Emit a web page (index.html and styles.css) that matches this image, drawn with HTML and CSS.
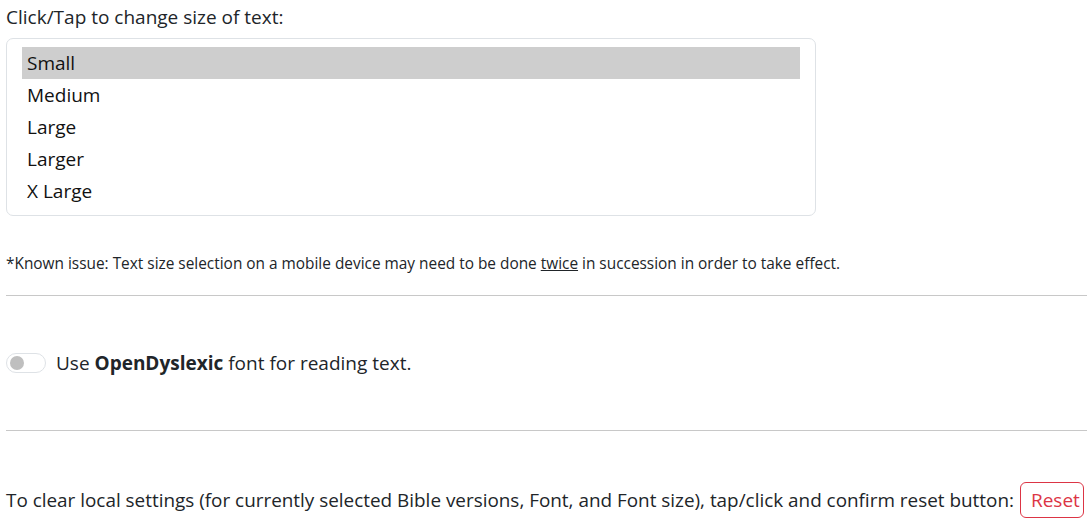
FILE: index.html
```html
<!DOCTYPE html>
<html>
<head>
<meta charset="utf-8">
<link rel="stylesheet" href="styles.css">
</head>
<body>
<div class="page">
  <div class="label">Click/Tap to change size of text:</div>
  <div class="listbox">
    <div class="opt sel">Small</div>
    <div class="opt">Medium</div>
    <div class="opt">Large</div>
    <div class="opt">Larger</div>
    <div class="opt">X Large</div>
  </div>
  <p class="note">*Known issue: Text size selection on a mobile device may need to be done <u>twice</u> in succession in order to take effect.</p>
  <hr class="rule">
  <div class="toggle-row">
    <span class="switch"><span class="knob"></span></span>
    <span>Use <b class="od">OpenDyslexic</b> font for reading text.</span>
  </div>
  <hr class="rule rule2">
  <div class="reset-row">
    <span class="reset-text">To clear local settings (for currently selected Bible versions, Font, and Font size), tap/click and confirm reset button:</span>
    <button class="reset">Reset</button>
  </div>
</div>
</body>
</html>
```
FILE: styles.css
```css
html, body { margin: 0; padding: 0; background: #fff; }
body { font-family: "Open Sans", "Noto Sans", sans-serif; color: #212529; }
.page { padding: 0 0 0 6px; }
.label { font-size: 19px; line-height: 24px; padding-top: 5px; height: 38px; box-sizing: border-box; }
.listbox { width: 810px; box-sizing: border-box; border: 1px solid #dee2e6; border-radius: 7px; padding: 8px 15px; }
.opt { height: 32px; line-height: 33px; font-size: 19px; padding-left: 5px; color: #111; }
.opt.sel { background: #cecece; }
.note { font-size: 15.4px; margin: 38px 0 0; line-height: 20px; white-space: nowrap; }
.rule { border: 0; border-top: 1px solid #c8c8c8; margin: 21px 0 0; }
.toggle-row { display: flex; align-items: center; gap: 10px; font-size: 19px; margin-top: 55px; height: 24px; }
.switch { width: 40px; height: 20px; border: 1px solid #dee2e6; border-radius: 10px; box-sizing: border-box; position: relative; display: inline-block; flex: none; }
.knob { position: absolute; left: 3px; top: 2px; width: 14px; height: 14px; border-radius: 50%; background: #bfbfbf; }
.od { font-weight: 700; }
.rule2 { margin-top: 55px; }
.reset-row { display: flex; align-items: center; gap: 6px; font-size: 18.9px; margin-top: 51px; white-space: nowrap; }
.reset { font: inherit; font-size: 19px; color: #dc3545; background: #fff; border: 1px solid #dc3545; border-radius: 6px; padding: 0 10px; height: 36px; width: 64px; flex: none; }
```
